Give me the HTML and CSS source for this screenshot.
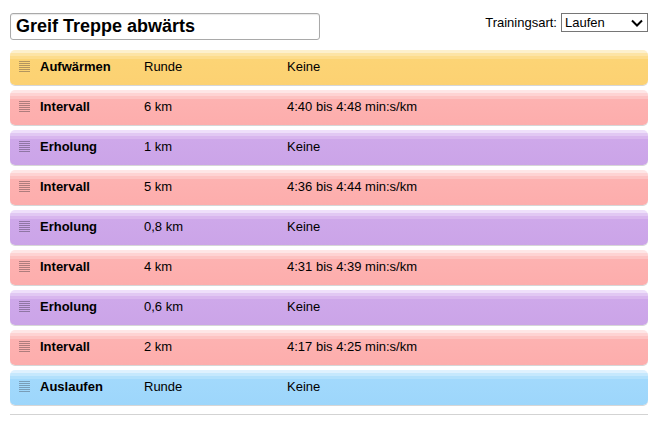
FILE: index.html
```html
<!DOCTYPE html>
<html>
<head>
<meta charset="utf-8">
<link rel="stylesheet" href="styles.css">
</head>
<body>
<div class="page">
  <div class="header">
    <input class="title" type="text" value="Greif Treppe abwärts">
    <label class="type">Trainingsart:
      <span class="select">Laufen<svg class="chev" width="12" height="8" viewBox="0 0 12 8"><path d="M1 1.5 L6 6.5 L11 1.5" fill="none" stroke="#000" stroke-width="2"/></svg></span>
    </label>
  </div>
  <div class="list">
    <div class="row warm"><span class="handle"></span><span class="name">Aufwärmen</span><span class="dist">Runde</span><span class="pace">Keine</span></div>
    <div class="row intv"><span class="handle"></span><span class="name">Intervall</span><span class="dist">6 km</span><span class="pace">4:40 bis 4:48 min:s/km</span></div>
    <div class="row rest"><span class="handle"></span><span class="name">Erholung</span><span class="dist">1 km</span><span class="pace">Keine</span></div>
    <div class="row intv"><span class="handle"></span><span class="name">Intervall</span><span class="dist">5 km</span><span class="pace">4:36 bis 4:44 min:s/km</span></div>
    <div class="row rest"><span class="handle"></span><span class="name">Erholung</span><span class="dist">0,8 km</span><span class="pace">Keine</span></div>
    <div class="row intv"><span class="handle"></span><span class="name">Intervall</span><span class="dist">4 km</span><span class="pace">4:31 bis 4:39 min:s/km</span></div>
    <div class="row rest"><span class="handle"></span><span class="name">Erholung</span><span class="dist">0,6 km</span><span class="pace">Keine</span></div>
    <div class="row intv"><span class="handle"></span><span class="name">Intervall</span><span class="dist">2 km</span><span class="pace">4:17 bis 4:25 min:s/km</span></div>
    <div class="row cool"><span class="handle"></span><span class="name">Auslaufen</span><span class="dist">Runde</span><span class="pace">Keine</span></div>
  </div>
  <div class="rule"></div>
</div>
</body>
</html>
```
FILE: styles.css
```css
html, body { margin: 0; padding: 0; background: #fff; }
body { font-family: "Liberation Sans", Arial, sans-serif; font-size: 13px; color: #000; }
.page { padding: 13px 9px 0 10px; width: 638px; }
.header { display: flex; justify-content: space-between; align-items: flex-start; height: 37px; }
.title {
  box-sizing: border-box; width: 310px; height: 27px; margin: 0;
  border: 1px solid #a9a9a9; border-radius: 3px; padding: 0 5px;
  font-family: "Liberation Sans", Arial, sans-serif; font-size: 18px; font-weight: bold; color: #000;
  outline: none; box-shadow: inset 0 1px 1px #e8e8e8;
}
.type { display: flex; align-items: center; gap: 4px; font-size: 13px; }
.select {
  box-sizing: border-box; width: 87px; height: 19px; border: 1px solid #767676;
  display: flex; align-items: center; justify-content: space-between; padding: 0 4px 0 3px;
  font-size: 13px; background: #fff;
}
.chev { display: block; }
.list { display: flex; flex-direction: column; gap: 5px; }
.row {
  box-sizing: border-box; height: 35px; padding-bottom: 2px; border-radius: 5px; display: flex; align-items: center;
  box-shadow: 0 1px 0 #d6d6d6;
}
.handle {
  width: 11px; height: 11px; margin: 0 10px 0 9px;
  opacity: .8;
}
.name { width: 104px; font-weight: bold; }
.dist { width: 143px; }
.pace { flex: 1; }
.warm { background: linear-gradient(to bottom, #fdf0cd 0, #fdf0cd 3px, #fde4a6 3px, #fde4a6 6px, #fddc8c 6px, #fddc8c 9px, #fcd475 9px, #fcd172 100%); }
.warm .handle { background: repeating-linear-gradient(to bottom, #a0865a 0 1px, transparent 1px 2px); }
.intv { background: linear-gradient(to bottom, #fee6e6 0, #fee6e6 3px, #fed3d3 3px, #fed3d3 6px, #fdc3c2 6px, #fdc3c2 9px, #fdb2b1 9px, #fdadac 100%); }
.intv .handle { background: repeating-linear-gradient(to bottom, #9a7070 0 1px, transparent 1px 2px); }
.rest { background: linear-gradient(to bottom, #eedffa 0, #eedffa 3px, #e1c8f3 3px, #e1c8f3 6px, #d8b6ee 6px, #d8b6ee 9px, #cea8ea 9px, #cba4e8 100%); }
.rest .handle { background: repeating-linear-gradient(to bottom, #7f6a92 0 1px, transparent 1px 2px); }
.cool { background: linear-gradient(to bottom, #dff1fe 0, #dff1fe 3px, #c6e8fd 3px, #c6e8fd 6px, #b2e0fc 6px, #b2e0fc 9px, #a2d9fc 9px, #9dd6fb 100%); }
.cool .handle { background: repeating-linear-gradient(to bottom, #6f8ea6 0 1px, transparent 1px 2px); }
.rule { height: 1px; background: #d3d3d3; margin-top: 9px; }
```
